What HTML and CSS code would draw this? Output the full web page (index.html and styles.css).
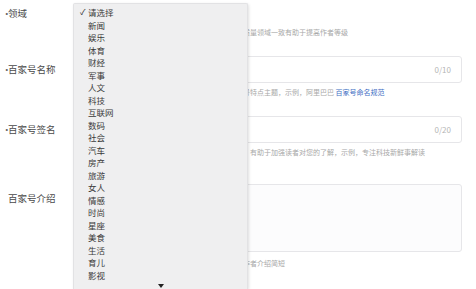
FILE: index.html
```html
<!DOCTYPE html>
<html lang="zh-CN">
  <head>
    <meta charset="UTF-8" />
    <meta name="viewport" content="width=device-width, initial-scale=1.0" />
    <title>百家号信息</title>
    <link rel="stylesheet" href="styles.css">
  </head>
  <body>
    <main id="form">
      <div class="row">
        <label class="label required">领域</label>
        <div class="field">
          <div class="select"></div>
          <p class="hint">请谨慎选择，领域确定后不可修改，选择与您发布内容质量领域一致有助于提高作者等级</p>
        </div>
      </div>
      <div class="row">
        <label class="label required">百家号名称</label>
        <div class="field">
          <div class="input"><span class="count">0/10</span></div>
          <p class="hint">名称不得含有违规词汇，审核通过后可修改，需体现账号特点主题，示例，阿里巴巴 <a href="#">百家号命名规范</a></p>
        </div>
      </div>
      <div class="row">
        <label class="label required">百家号签名</label>
        <div class="field">
          <div class="input"><span class="count">0/20</span></div>
          <p class="hint">签名将展示在主页与文章页中，一句话介绍您的百家号，有助于加强读者对您的了解，示例，专注科技新鲜事解读</p>
        </div>
      </div>
      <div class="row intro">
        <label class="label">百家号介绍</label>
        <div class="field">
          <div class="textarea"></div>
          <p class="hint">介绍将展示在百家号主页，请填写与领域相关的内容，作者介绍简短</p>
        </div>
      </div>

      <ul class="menu">
        <li class="checked">请选择</li>
        <li>新闻</li>
        <li>娱乐</li>
        <li>体育</li>
        <li>财经</li>
        <li>军事</li>
        <li>人文</li>
        <li>科技</li>
        <li>互联网</li>
        <li>数码</li>
        <li>社会</li>
        <li>汽车</li>
        <li>房产</li>
        <li>旅游</li>
        <li>女人</li>
        <li>情感</li>
        <li>时尚</li>
        <li>星座</li>
        <li>美食</li>
        <li>生活</li>
        <li>育儿</li>
        <li>影视</li>
        <li class="more"><span class="arrow"></span></li>
      </ul>
    </main>
  </body>
</html>
```

FILE: styles.css
```css
html {
    font-family: "Noto Sans CJK SC", "Noto Sans", sans-serif;
    color: #4a4a4a;
}

body {
    margin: 0;
    background: #fff;
    overflow: hidden;
}

main {
    position: relative;
    min-height: 289px;
    box-sizing: border-box;
    padding: 3px 14px 0 2px;
}

.row {
    display: grid;
    grid-template-columns: 73px 1fr;
    margin-bottom: 19px;
}

.row.intro {
    margin-top: 27px;
}

.label {
    font-size: 9.5px;
    line-height: 12px;
    padding-left: 6px;
    position: relative;
    align-self: start;
    margin-top: 7px;
}

.row:first-child .label {
    margin-top: 4px;
}

.required::before {
    content: "•";
    position: absolute;
    left: 0;
    color: #666;
}

.row.intro .label {
    margin-top: 8px;
}

.select {
    height: 22px;
}

.input {
    height: 27px;
    border: 1px solid #e6e6e9;
    border-radius: 3px;
    box-sizing: border-box;
    display: flex;
    align-items: center;
    justify-content: flex-end;
    padding-right: 10px;
}

.count {
    font-size: 8px;
    color: #b5b5b5;
}

.textarea {
    height: 68px;
    border: 1px solid #e6e6e9;
    border-radius: 3px;
    box-sizing: border-box;
    background: #fcfcfd;
}

.hint {
    margin: 4px 0 0 0;
    font-size: 7px;
    line-height: 10px;
    color: #a8a8a8;
    white-space: nowrap;
}

.row:first-child .hint {
    margin-top: 2px;
}

.row.intro .hint {
    margin-top: 6px;
}

.hint a {
    color: #3f6fc4;
    text-decoration: none;
}

.menu {
    position: absolute;
    left: 73px;
    top: 3px;
    width: 175px;
    height: 286px;
    margin: 0;
    padding: 2px 0 0 0;
    list-style: none;
    background: #efeff0;
    border: 1px solid #e2e2e4;
    border-bottom: none;
    box-sizing: border-box;
    box-shadow: 1px 1px 3px rgba(0, 0, 0, 0.12);
    border-radius: 2px 2px 0 0;
}

.menu li {
    height: 12.5px;
    font-size: 8.5px;
    line-height: 12.5px;
    padding-left: 14px;
    color: #3a3a3a;
    position: relative;
}

.menu li.checked::before {
    content: "✓";
    position: absolute;
    left: 6px;
    font-size: 8px;
    color: #222;
}

.menu li.more {
    height: 6px;
    padding: 3px 0 0 84px;
    line-height: 0;
}

.arrow {
    display: block;
    width: 0;
    height: 0;
    border-left: 3px solid transparent;
    border-right: 3px solid transparent;
    border-top: 4px solid #222;
}
```
